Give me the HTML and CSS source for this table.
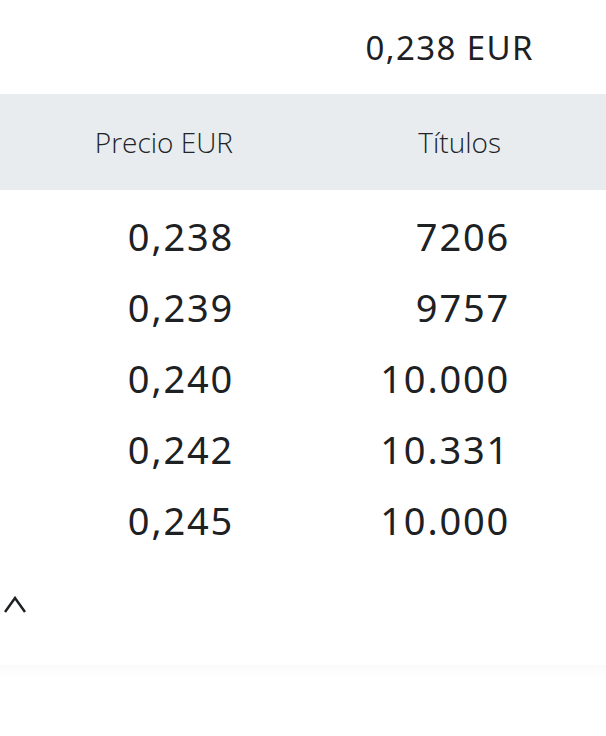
FILE: index.html
```html
<!DOCTYPE html>
<html lang="es">
<head>
<meta charset="utf-8">
<link rel="stylesheet" href="styles.css">
</head>
<body>
<div class="quote">0,238 EUR</div>
<div class="head">
  <div class="hcell">Precio EUR</div>
  <div class="hcell hcell-qty">Títulos</div>
</div>
<div class="rows">
  <div class="row"><span>0,238</span><span>7206</span></div>
  <div class="row"><span>0,239</span><span>9757</span></div>
  <div class="row"><span>0,240</span><span>10.000</span></div>
  <div class="row"><span>0,242</span><span>10.331</span></div>
  <div class="row"><span>0,245</span><span>10.000</span></div>
</div>
<div class="toggle">
  <svg class="chev" width="22" height="18" viewBox="0 0 22 18"><path d="M1 16 L11 2 L21 16" fill="none" stroke="#1d2124" stroke-width="2.5"/></svg>
</div>
<div class="fade"></div>
</body>
</html>
```
FILE: styles.css
```css
html, body { margin: 0; padding: 0; background: #fff; }
body {
  font-family: "Noto Sans", "DejaVu Sans", sans-serif;
  color: #1d2124;
  width: 606px;
}
.quote {
  height: 94px;
  display: flex;
  align-items: center;
  justify-content: flex-end;
  padding-right: 72px;
  font-size: 33px;
  letter-spacing: 1.4px;
  box-sizing: border-box;
}
.head {
  height: 96px;
  background: #e8ecee;
  display: grid;
  grid-template-columns: 233px 268px;
  align-items: center;
  font-size: 28px;
  font-weight: 300;
  font-family: "Open Sans", "Noto Sans", sans-serif;
  color: #202427;
}
.hcell { text-align: right; }
.rows {
  padding-top: 10px;
}
.row {
  height: 71px;
  display: grid;
  grid-template-columns: 234px 276px;
  align-items: center;
  font-size: 38px;
  letter-spacing: 1.8px;
}
.row span { text-align: right; }
.toggle {
  height: 110px;
  box-sizing: border-box;
  padding-top: 41px;
  padding-left: 4px;
}
.chev { display: block; }
.fade {
  height: 14px;
  background: linear-gradient(#fafafa, #fff);
}
```
